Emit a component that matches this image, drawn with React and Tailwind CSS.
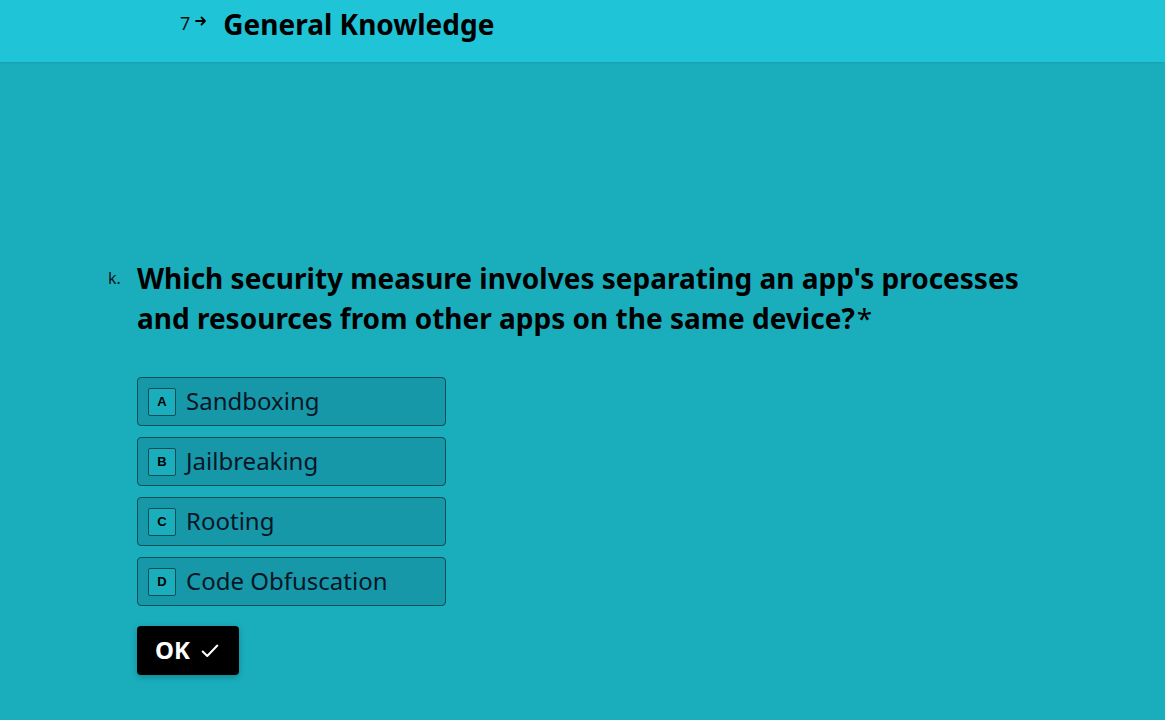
import React from "react";

const options = [
  ["A", "Sandboxing"],
  ["B", "Jailbreaking"],
  ["C", "Rooting"],
  ["D", "Code Obfuscation"],
];

export default function App() {
  return (
    <div className="w-[1165px] h-[720px] overflow-hidden bg-[#1aaebd] text-black" style={{ fontFamily: '"Noto Sans", "Open Sans", sans-serif' }}>
      <div className="h-[62px] bg-[#1fc4d6] flex items-center pl-[180px] shadow-[0_1px_2px_rgba(0,0,0,0.08)]">
        <span className="text-[18px] leading-none text-[#111] mt-[-16px]">7</span>
        <svg width="12" height="12" viewBox="0 0 12 12" className="ml-[5px] mt-[-20px]">
          <path d="M1 6h9M6.5 2.5L10 6l-3.5 3.5" stroke="#000" strokeWidth="1.8" fill="none" strokeLinecap="round" strokeLinejoin="round" />
        </svg>
        <span className="ml-[16px] text-[28px] font-bold leading-none mt-[-14px]">General Knowledge</span>
      </div>
      <div className="pl-[108px] pt-[196px]">
        <div className="flex">
          <span className="w-[29px] text-[16px] leading-[40px] text-[#111]">k.</span>
          <h1 className="w-[900px] text-[28px] font-bold leading-[40px]">
            Which security measure involves separating an app's processes and resources from other apps on the same device?<span className="font-normal ml-[2px]">*</span>
          </h1>
        </div>
        <div className="pl-[29px] mt-[39px] flex flex-col gap-[11px]">
          {options.map(([k, t]) => (
            <div key={k} className="w-[309px] h-[49px] rounded-[4px] border border-[#0a4e57] bg-[#1798a8] flex items-center pl-[10px]">
              <span className="w-[28px] h-[28px] border border-[#0a4e57] rounded-[2px] bg-[#1aaebd] flex items-center justify-center text-[13px] font-bold" style={{ fontFamily: '"Liberation Sans", Arial, sans-serif' }}>
                {k}
              </span>
              <span className="ml-[10px] text-[24px] leading-none text-[#081626] mt-[-2px]">{t}</span>
            </div>
          ))}
          <button className="mt-[9px] w-[102px] h-[49px] rounded-[4px] bg-black text-white flex items-center pl-[18px] shadow-[0_2px_6px_rgba(0,0,0,0.25)]">
            <span className="text-[24px] font-bold leading-none mt-[-2px]">OK</span>
            <svg width="22" height="22" viewBox="0 0 24 24" className="ml-[9px]">
              <path d="M4 12.5l5 5L20 6" stroke="#fff" strokeWidth="2.2" fill="none" strokeLinecap="round" strokeLinejoin="round" />
            </svg>
          </button>
        </div>
      </div>
    </div>
  );
}
